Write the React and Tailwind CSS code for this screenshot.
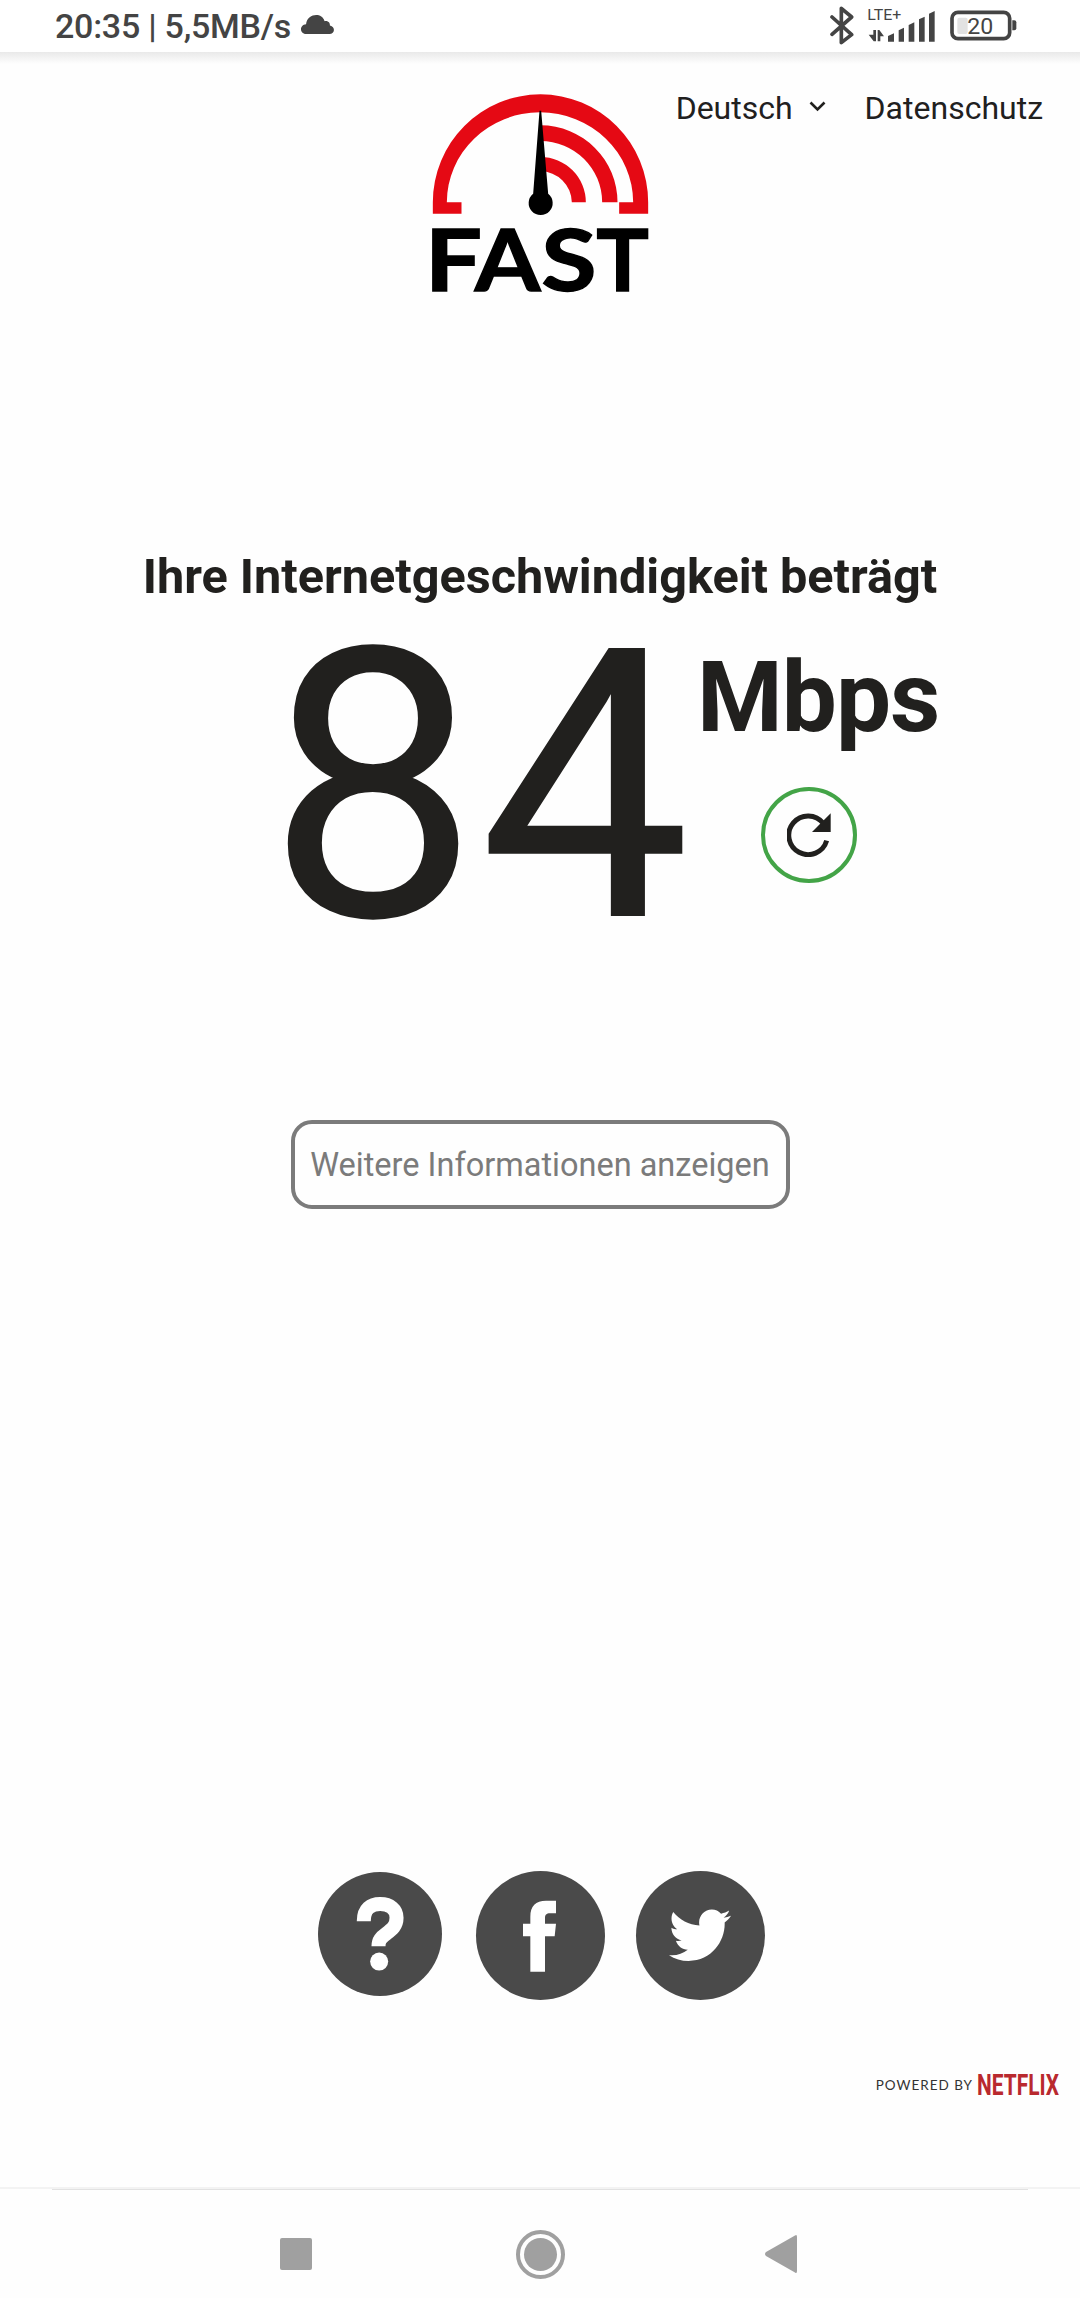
import React from "react";

function BluetoothIcon() {
  return (
    <svg className="h-[39px] w-6" viewBox="60 15 72 117" fill="none" stroke="#444" strokeWidth="11" strokeLinecap="round" strokeLinejoin="round">
      <path d="M66 48 L125 101 L94 125 V22 L125 48 L66 100" />
    </svg>
  );
}

function SignalIcon() {
  return (
    <svg className="ml-[14px] h-[33px] w-[67px] overflow-visible" viewBox="174 25 201 99" fill="#444">
      <text x="172" y="57" fontSize="43" textLength="102" lengthAdjust="spacingAndGlyphs" className="font-[Roboto,sans-serif]">
        LTE+
      </text>
      <path d="M176 102 H190 V88 H198 V122 H191 Z" />
      <path d="M203 122 V88 H208 L222 107 H211 V122 Z" />
      <path d="M234 123 V106 L252 98 V123 Z" />
      <path d="M266 123 V89 L282 81 V123 Z" />
      <path d="M296 123 V73 L313 65 V123 Z" />
      <path d="M327 123 V56 L344 48 V123 Z" />
      <path d="M357 123 V39 L374 31 V123 Z" />
    </svg>
  );
}

function BatteryIcon() {
  return (
    <svg className="ml-[15px] h-[31px] w-[67px] overflow-visible" viewBox="419 28 201 93">
      <rect x="425" y="35" width="173" height="79" rx="18" fill="none" stroke="#444" strokeWidth="11" />
      <rect x="441" y="51" width="31" height="49" rx="6" fill="#e2e2e2" />
      <path d="M606 59 H612 Q618 59 618 65 V83 Q618 89 612 89 H606 Z" fill="#444" />
      <text x="471" y="101" fontSize="67" fill="#444" textLength="78" lengthAdjust="spacingAndGlyphs" className="font-[Roboto,sans-serif]">
        20
      </text>
    </svg>
  );
}

function StatusBar() {
  return (
    <header className="flex h-[52px] items-center justify-between bg-white pr-[63px] pl-[55px] text-[#444]">
      <div className="flex items-center">
        <span className="text-[34px] leading-[52px] font-medium tracking-[-0.25px]">20:35 | 5,5MB/s</span>
        <svg className="mb-[3px] ml-[10px] h-[19px] w-[33px]" viewBox="782 43 98 56" fill="currentColor">
          <path d="M797 99 C777 99 777 71 797 70 C801 38 844 34 852 61 C866 60 868 68 868 74 C885 78 883 99 866 99 Z" />
        </svg>
      </div>
      <div className="flex h-[50px] items-center pb-0.5">
        <BluetoothIcon />
        <SignalIcon />
        <BatteryIcon />
      </div>
    </header>
  );
}

function FastLogo() {
  return (
    <svg className="h-[198px] w-[216px] overflow-visible" viewBox="36.5 43 648 594">
      <g fill="#e50914">
        <path d="M39 402 V368 A323 324 0 0 1 685 368 V402 H598 V368 H640 A279.5 270 0 0 0 81 368 H125 V402 Z" />
        <path d="M362 137 A231 231 0 0 1 593 368 H547 A185 184 0 0 0 362 184 Z" />
        <path d="M362 232 A136 136 0 0 1 498 368 H456 A94 94 0 0 0 362 275 Z" />
      </g>
      <path d="M359 93 H364 L385 342 A36 36 0 1 1 340 342 Z" fill="#000" />
      <g fontSize="258" stroke="#000" strokeWidth="4" className="font-[Lato,sans-serif] font-bold">
        <text x="15" y="634" textLength="172" lengthAdjust="spacingAndGlyphs">F</text>
        <text x="165" y="634" textLength="197" lengthAdjust="spacingAndGlyphs">A</text>
        <text x="364" y="634" textLength="166" lengthAdjust="spacingAndGlyphs">S</text>
        <text x="529" y="634" textLength="158" lengthAdjust="spacingAndGlyphs">T</text>
      </g>
    </svg>
  );
}

function ReloadButton() {
  return (
    <button className="flex h-24 w-24 items-center justify-center rounded-full border-4 border-[#43a447]">
      <svg className="h-11 w-11" viewBox="141 132 132 132">
        <path d="M250 163 A58 58 0 1 0 260 215" fill="none" stroke="#21201e" strokeWidth="15" />
        <path d="M272 133 V189 H216 Z" fill="#21201e" />
      </svg>
    </button>
  );
}

function SocialLinks() {
  return (
    <div className="flex items-start">
      <a className="mt-px flex h-[124px] w-[124px] items-center justify-center rounded-full bg-[#4a4a4a]">
        <svg className="h-[124px] w-[124px]" viewBox="55 66 371 371">
          <path d="M192 213 C192 176 213 162 241 162 C271 162 290 178 290 203 C290 227 277 237 260 250 C243 262 236 270 236 288" fill="none" stroke="#fff" strokeWidth="42" />
          <circle cx="238" cy="334" r="27" fill="#fff" />
        </svg>
      </a>
      <a className="ml-[34px] h-[129px] w-[129px] rounded-full bg-[#4a4a4a]">
        <svg className="h-[129px] w-[129px]" viewBox="528 64 387 387" fill="#fff">
          <path d="M691 366 V260 H669 V222 H691 V201 C691 169 707 153 738 153 H768 V191 H750 C739 191 735 196 735 205 V222 H768 L764 260 H735 V366 Z" />
        </svg>
      </a>
      <a className="ml-[31px] h-[129px] w-[129px] rounded-full bg-[#4a4a4a]">
        <svg className="h-[129px] w-[129px]" viewBox="1008 64 387 387" fill="#fff">
          <path
            transform="translate(1107 162) scale(7.75 7.9)"
            d="M23.954 4.569c-.885.389-1.83.654-2.825.775 1.014-.611 1.794-1.574 2.163-2.723-.951.555-2.005.959-3.127 1.184-.896-.959-2.173-1.559-3.591-1.559-2.717 0-4.92 2.203-4.92 4.917 0 .39.045.765.127 1.124C7.691 8.094 4.066 6.13 1.64 3.161c-.427.722-.666 1.561-.666 2.475 0 1.71.87 3.213 2.188 4.096-.807-.026-1.566-.248-2.228-.616v.061c0 2.385 1.693 4.374 3.946 4.827-.413.111-.849.171-1.296.171-.314 0-.615-.03-.916-.086.631 1.953 2.445 3.377 4.604 3.417-1.68 1.319-3.809 2.105-6.102 2.105-.39 0-.779-.023-1.17-.067 2.189 1.394 4.768 2.209 7.557 2.209 9.054 0 13.999-7.496 13.999-13.986 0-.209 0-.42-.015-.63.961-.689 1.8-1.56 2.46-2.548l-.047-.02z"
          />
        </svg>
      </a>
    </div>
  );
}

function PoweredBy() {
  return (
    <div className="flex items-center justify-end pr-[21px]">
      <span className="font-[Lato,sans-serif] text-[13.5px] leading-6 tracking-[1px] text-[#333]">POWERED BY</span>
      <svg className="ml-[5px] h-6 w-[81px] overflow-visible" viewBox="0 0 81 24" fill="#b9292e">
        <text x="-1" y="22" fontSize="29" textLength="82" lengthAdjust="spacingAndGlyphs" className="font-[Roboto,sans-serif] font-bold">
          NETFLIX
        </text>
      </svg>
    </div>
  );
}

function NavigationBar() {
  return (
    <nav className="h-[111px]">
      <div className="h-0.5 bg-[#f3f3f3]" />
      <div className="mx-[52px] h-px bg-[#e2e2e2]" />
      <div className="flex h-[128px] items-center justify-between pr-[283px] pl-[280px]">
        <div className="mb-px h-8 w-8 rounded-[2px] bg-[#a0a0a0]" />
        <div className="ml-1 flex h-[49px] w-[49px] items-center justify-center rounded-full border-4 border-[#a0a0a0]">
          <div className="h-[33px] w-[33px] rounded-full bg-[#a0a0a0]" />
        </div>
        <svg className="h-[38px] w-8" viewBox="0 0 32 38" fill="#a0a0a0">
          <path d="M30 0.5 Q32 -1 32 2 V36 Q32 39 30 37.5 L1 21 Q-1 19 1 17 Z" />
        </svg>
      </div>
    </nav>
  );
}

export default function App() {
  return (
    <div className="flex h-[2298px] w-[1080px] flex-col overflow-hidden bg-[#fefefe] font-[Roboto,sans-serif] text-[#21201e]">
      <StatusBar />
      <div className="h-3 bg-linear-to-b from-[#e9e9e9] to-[#fefefe]" />

      <div className="mt-[30px] grid h-[198px] grid-cols-[432px_216px_1fr]">
        <div />
        <FastLogo />
        <div className="flex h-7 items-center justify-end pr-[37px] text-[32px] leading-7">
          <span>Deutsch</span>
          <svg className="mr-[39px] mb-1 ml-[16px] h-[11px] w-[17px]" viewBox="0 0 17 11" fill="none" stroke="currentColor" strokeWidth="2.6">
            <path d="M1.5 1.5 L8.5 8.5 L15.5 1.5" />
          </svg>
          <span>Datenschutz</span>
        </div>
      </div>

      <h1 className="mt-[261px] text-center text-[48.6px] leading-[48px] font-bold">Ihre Internetgeschwindigkeit beträgt</h1>

      <div className="mt-9 flex h-[300px] pl-[267px]">
        <div className="w-[430px] text-[377px] leading-[300px]">84</div>
        <div className="flex w-[246px] flex-col pt-[12px]">
          <div className="text-[98px] leading-[98px] font-bold tracking-[-1px]">Mbps</div>
          <div className="mt-[40px] pl-16">
            <ReloadButton />
          </div>
        </div>
      </div>

      <div className="mt-[183px] flex justify-center">
        <button className="h-[89px] w-[499px] rounded-[21px] border-4 border-[#7b7b7b] pt-0.5 text-[32.5px] whitespace-nowrap text-[#7b7b7b]">
          Weitere Informationen anzeigen
        </button>
      </div>

      <div className="mt-[662px] pl-[318px]">
        <SocialLinks />
      </div>

      <div className="mt-[73px]">
        <PoweredBy />
      </div>

      <div className="mt-auto">
        <NavigationBar />
      </div>
    </div>
  );
}
